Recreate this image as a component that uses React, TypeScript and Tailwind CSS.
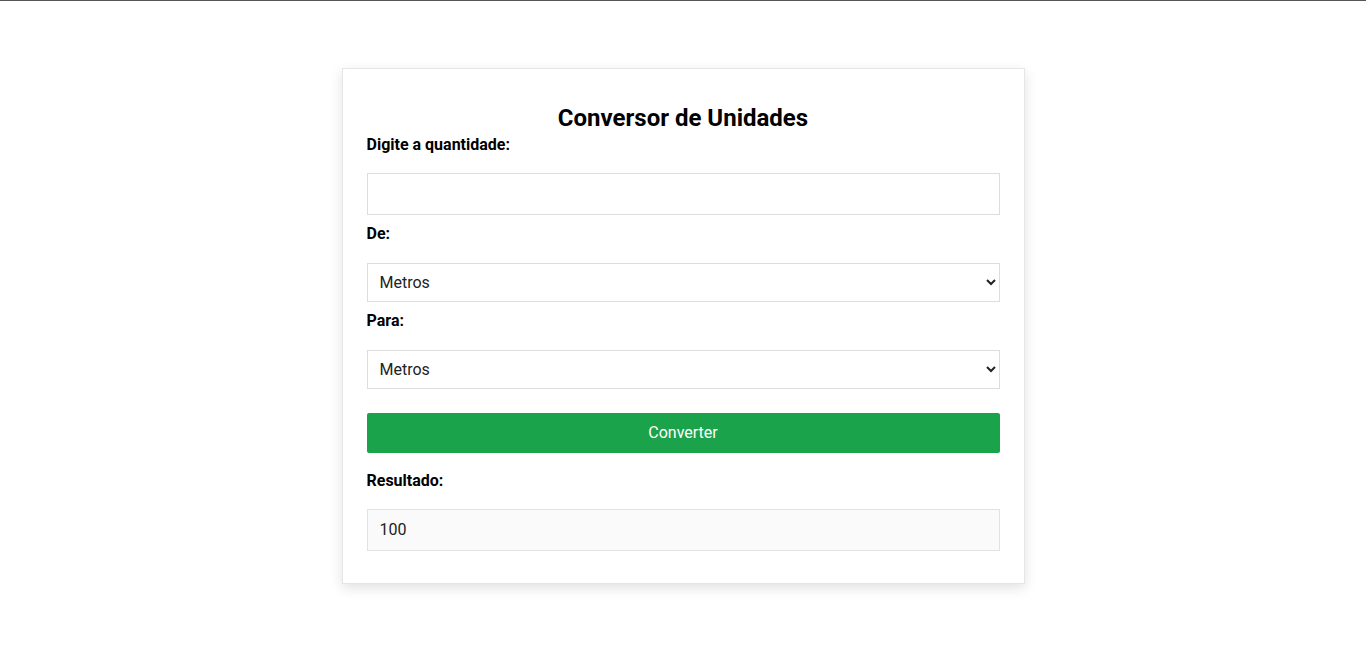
import { useState } from "react";

const units = ["Metros", "Centímetros", "Milímetros", "Quilômetros"];

export default function App() {
  const [valor, setValor] = useState("");
  const [de, setDe] = useState("Metros");
  const [para, setPara] = useState("Metros");
  const [resultado] = useState("100");

  return (
    <div className="min-h-[648px] bg-white border-t border-[#555] font-['Roboto',sans-serif] text-black">
      <div className="mx-auto mt-[67px] w-[683px] border border-[#e6e6e6] bg-white px-6 pt-[35px] pb-[32px] shadow-[0_4px_12px_rgba(0,0,0,0.12)]">
        <h2 className="text-center text-[24px] font-bold leading-[29px]">Conversor de Unidades</h2>

        <label className="mt-[3px] block text-[16px] font-bold leading-[18px]">Digite a quantidade:</label>
        <input
          type="number"
          value={valor}
          onChange={(e) => setValor(e.target.value)}
          className="mt-[19px] block h-[42px] w-full border border-[#ddd] px-3 text-[16px] outline-none"
        />

        <label className="mt-[10px] block text-[16px] font-bold leading-[18px]">De:</label>
        <select
          value={de}
          onChange={(e) => setDe(e.target.value)}
          className="mt-[20px] block h-[39px] w-full border border-[#ddd] bg-white px-2 text-[16px] text-[#222] outline-none"
        >
          {units.map((u) => (
            <option key={u}>{u}</option>
          ))}
        </select>

        <label className="mt-[10px] block text-[16px] font-bold leading-[18px]">Para:</label>
        <select
          value={para}
          onChange={(e) => setPara(e.target.value)}
          className="mt-[20px] block h-[39px] w-full border border-[#ddd] bg-white px-2 text-[16px] text-[#222] outline-none"
        >
          {units.map((u) => (
            <option key={u}>{u}</option>
          ))}
        </select>

        <button className="mt-[24px] block h-[40px] w-full rounded-[2px] bg-[#1aa34a] text-[16px] text-white">
          Converter
        </button>

        <label className="mt-[19px] block text-[16px] font-bold leading-[18px]">Resultado:</label>
        <div className="mt-[19px] flex h-[42px] w-full items-center border border-[#e2e2e2] bg-[#fafafa] px-3 text-[16px] text-[#222]">
          {resultado}
        </div>
      </div>
    </div>
  );
}
